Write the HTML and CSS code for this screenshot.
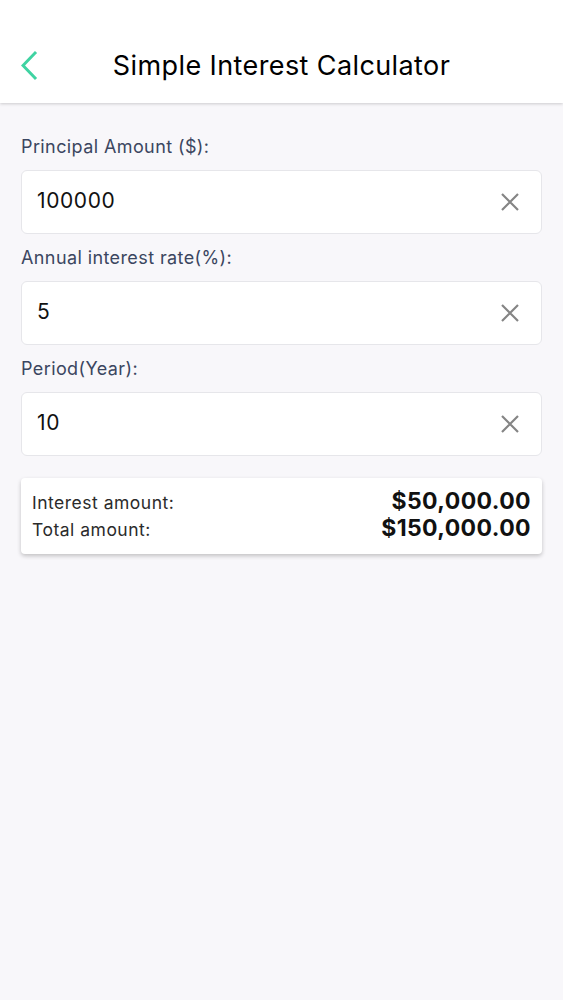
FILE: index.html
```html
<!DOCTYPE html>
<html>
<head>
<meta charset="utf-8">
<link rel="stylesheet" href="styles.css">
</head>
<body>
<header class="topbar">
  <div class="back">
    <svg width="24" height="32" viewBox="0 0 24 32"><path d="M14 3 L2 15.5 L14 28" fill="none" stroke="#3fd3a2" stroke-width="3" stroke-linecap="square"/></svg>
  </div>
  <h1 class="title">Simple Interest Calculator</h1>
</header>
<main class="content">
  <div class="field">
    <label class="label">Principal Amount ($):</label>
    <div class="input">
      <span class="value">100000</span>
      <svg class="clear" width="20" height="20" viewBox="0 0 20 20"><path d="M2 2 L18 18 M18 2 L2 18" stroke="#858585" stroke-width="2.2"/></svg>
    </div>
  </div>
  <div class="field">
    <label class="label">Annual interest rate(%):</label>
    <div class="input">
      <span class="value">5</span>
      <svg class="clear" width="20" height="20" viewBox="0 0 20 20"><path d="M2 2 L18 18 M18 2 L2 18" stroke="#858585" stroke-width="2.2"/></svg>
    </div>
  </div>
  <div class="field">
    <label class="label">Period(Year):</label>
    <div class="input">
      <span class="value">10</span>
      <svg class="clear" width="20" height="20" viewBox="0 0 20 20"><path d="M2 2 L18 18 M18 2 L2 18" stroke="#858585" stroke-width="2.2"/></svg>
    </div>
  </div>
  <div class="result">
    <div class="row"><span class="rlabel">Interest amount:</span><span class="rvalue">$50,000.00</span></div>
    <div class="row"><span class="rlabel">Total amount:</span><span class="rvalue">$150,000.00</span></div>
  </div>
</main>
</body>
</html>
```
FILE: styles.css
```css
* { box-sizing: border-box; }
html, body { margin: 0; padding: 0; }
body {
  background: #f8f7fa;
  font-family: Inter, "Noto Sans", sans-serif;
  width: 563px;
  height: 1000px;
}
.topbar {
  height: 103px;
  background: #fff;
  box-shadow: 0 1px 3px rgba(0,0,0,0.18);
  display: flex;
  align-items: center;
  position: relative;
  padding-top: 28px;
}
.back {
  position: absolute;
  left: 21px;
  top: 50px;
  width: 24px;
  height: 32px;
}
.title {
  flex: 1;
  margin: 0;
  text-align: center;
  font-size: 27px;
  font-weight: 400;
  color: #000;
  letter-spacing: 0.4px;
}
.content {
  padding: 32px 21px 0 21px;
}
.field { margin-bottom: 12px; }
.label {
  display: block;
  font-size: 18px;
  color: #3b4660;
  line-height: 24px;
  letter-spacing: 0.4px;
  margin-bottom: 11px;
}
.input {
  height: 64px;
  background: #fff;
  border: 1px solid #e6e6ea;
  border-radius: 6px;
  display: flex;
  align-items: center;
  justify-content: space-between;
  padding: 0 21px 3px 15px;
}
.value {
  font-size: 21px;
  color: #111;
  letter-spacing: 0.6px;
}
.clear { display: block; margin-top: 3px; }
.result {
  margin-top: 22px;
  background: #fff;
  border-radius: 4px;
  box-shadow: 0 2px 4px rgba(0,0,0,0.22);
  padding: 9px 11px 13px 11px;
  display: flex;
  flex-direction: column;
}
.row {
  display: flex;
  justify-content: space-between;
  align-items: baseline;
  height: 27px;
}
.rlabel { font-size: 17.5px; color: #2b2b2b; letter-spacing: 0.5px; }
.rvalue { font-size: 23px; font-weight: 700; color: #111; letter-spacing: 0.4px; }
```
